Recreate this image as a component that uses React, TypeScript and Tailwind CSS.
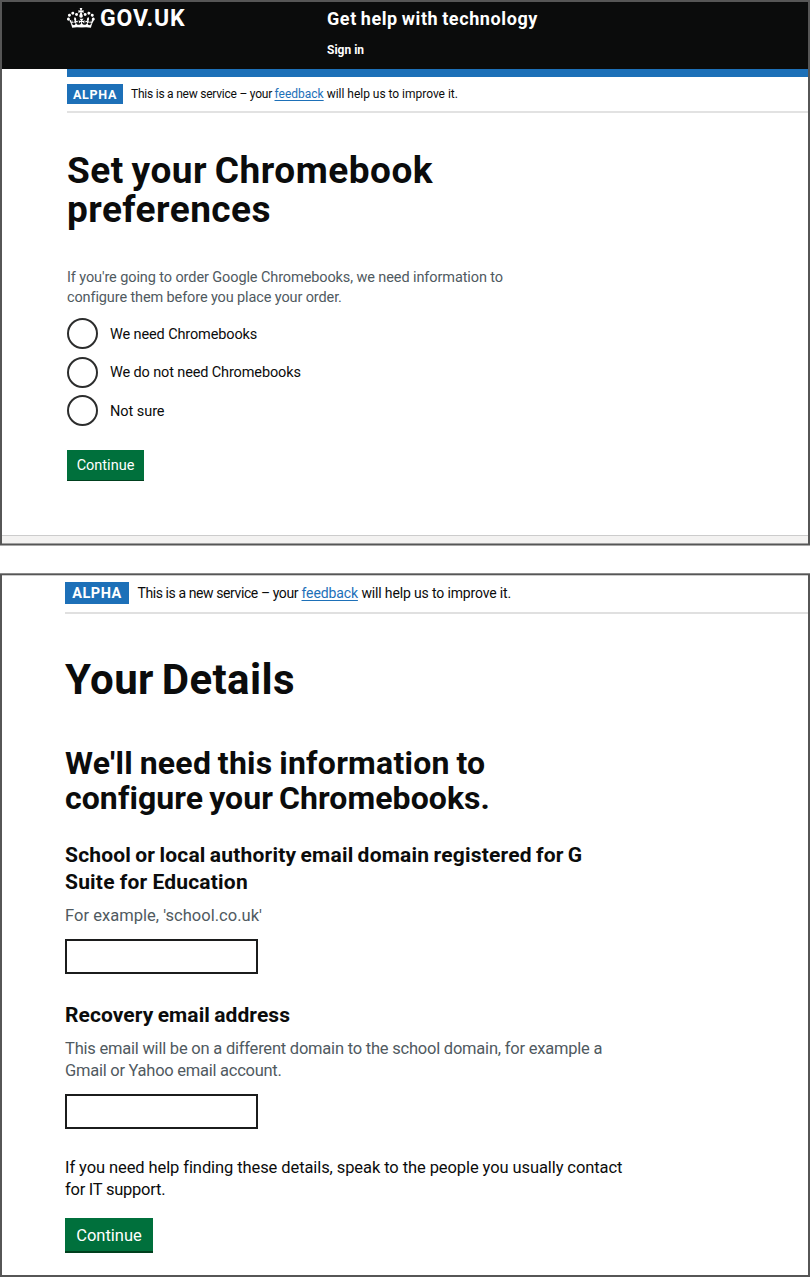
import type { ReactNode } from "react";

function Crown() {
  return (
    <svg viewBox="0 4 36 26" className="h-[21px] w-[28px]" preserveAspectRatio="none" fill="#fff" fillRule="evenodd" aria-hidden="true">
      <path d="M6.7 12.2c1 .4 2.1-.1 2.5-1s-.1-2.1-1-2.5c-1-.4-2.1.1-2.5 1-.4 1 0 2.1 1 2.5m-4.3 2.5c1 .4 2.1-.1 2.5-1s-.1-2.1-1-2.5c-1-.4-2.1.1-2.5 1-.5 1 0 2.1 1 2.5m-1.3 4.8c1 .4 2.1-.1 2.5-1 .4-1-.1-2.1-1-2.5-1-.4-2.1.1-2.5 1-.4 1 0 2.1 1 2.5m10.4-5.8c1 .4 2.1-.1 2.5-1s-.1-2.1-1-2.5c-1-.4-2.1.1-2.5 1s0 2.1 1 2.5m17.4-1.5c-1 .4-2.1-.1-2.5-1s.1-2.1 1-2.5c1-.4 2.1.1 2.5 1 .5 1 0 2.1-1 2.5m4.3 2.5c-1 .4-2.1-.1-2.5-1s.1-2.1 1-2.5c1-.4 2.1.1 2.5 1 .5 1 0 2.1-1 2.5m1.3 4.8c-1 .4-2.1-.1-2.5-1-.4-1 .1-2.1 1-2.5 1-.4 2.1.1 2.5 1 .4 1 0 2.1-1 2.5m-10.4-5.8c-1 .4-2.1-.1-2.5-1s.1-2.1 1-2.5c1-.4 2.1.1 2.5 1s0 2.1-1 2.5" />
      <path d="M18.9 8.9l2.4 1.2V6.5l-2.4.8c-.1-.1-.1-.2-.2-.2l1-3h-3.4l1 3c-.1.1-.2.1-.2.2l-2.4-.8v3.6L17.1 8.9c.1.1.1.2.2.3l-1.4 4.2c-.1.2-.1.4-.1.6 0 1.1.8 2 1.9 2.2h.7c1-.2 1.9-1.1 1.9-2.2 0-.2 0-.4-.1-.6l-1.4-4.2c-.1-.1 0-.2 0-.3" />
      <path d="M18 27.6c4.6 0 8.9.3 12.8.9 1.1-4.6 2.4-7.2 3.8-9.1l-2.6-.9c.3 1.3.3 1.9 0 2.8-.4-.4-.8-1.2-1.1-2.4l-1.2 4.2c.8-.5 1.4-.9 2-.9-1.2 2.6-2.7 3.2-3.6 3-1.2-.2-1.7-1.3-1.5-2.2.3-1.3 1.6-1.6 2.2-.1 1.1-2.3-.8-3.1-2-2.3 1.9-1.9 2.1-3.5.6-5.6-2.1 1.6-2.1 3.2-1.2 5.5-1.2-1.4-3.2-.6-2.5 1.6.9-1.4 2.1-.5 2 .8-.2 1.1-1.7 2.1-3.5 1.9-2.7-.2-2.9-2.1-2.9-3.6.7-.1 1.9.5 2.9 1.9l.4-4.3c-1.1 1.1-2.1 1.4-3.2 1.4.4-1.2 2.1-3 2.1-3h-5.4s1.7 1.9 2.1 3c-1.1 0-2.1-.2-3.2-1.4l.4 4.3c1-1.4 2.2-2 2.9-1.9-.1 1.5-.2 3.4-2.9 3.6-1.9.2-3.4-.8-3.5-1.9-.2-1.3 1-2.2 1.9-.8.7-2.3-1.2-3-2.5-1.6.9-2.2.9-3.9-1.2-5.5-1.5 2-1.3 3.7.6 5.6-1.2-.7-3.1 0-2 2.3.6-1.4 1.9-1.1 2.2.1.2.9-.3 1.9-1.5 2.2-.9.2-2.4-.5-3.6-3 .6 0 1.2.3 2 .9l-1.2-4.2c-.3 1.1-.7 1.9-1.1 2.4-.3-.8-.2-1.4 0-2.8l-2.6.9c1.4 1.9 2.6 4.5 3.8 9.1 3.9-.6 8.2-.9 12.8-.9" />
    </svg>
  );
}

function Line({ className, children }: { className: string; children: ReactNode }) {
  return <span className={`block whitespace-nowrap ${className}`}>{children}</span>;
}

function Radio({ label, className }: { label: string; className: string }) {
  return (
    <label className="flex items-center">
      <input type="radio" name="preference" className="h-[31px] w-[31px] shrink-0 appearance-none rounded-full border-2 border-[#2c2d2d] bg-white" />
      <span className={`ml-3 whitespace-nowrap pt-[2.5px] text-[14.5px] leading-5 ${className}`}>{label}</span>
    </label>
  );
}

export default function App() {
  return (
    <div className="h-[1277px] w-[812px] overflow-hidden bg-white font-['Roboto',sans-serif] text-[#0b0c0c]">
      <section className="flex h-[545px] w-[810px] flex-col border-2 border-b border-[#565656] bg-white shadow-[0_1px_0_#a8a8a8]">
        <header className="h-[67px] shrink-0 bg-[#0b0c0c] pl-[65px] font-bold text-white">
          <div className="flex h-[33px] items-center">
            <div className="flex w-[260px] items-center">
              <Crown />
              <Line className="ml-[5px] text-[23px] leading-[33px] tracking-[0.85px]">GOV.UK</Line>
            </div>
            <Line className="text-[18px] leading-[33px] tracking-[0.6px] [word-spacing:-1.2px]">Get help with technology</Line>
          </div>
          <a className="ml-[260px] block h-[30px] text-[12px] leading-[31px]">Sign in</a>
        </header>
        <div className="ml-[65px] h-2 shrink-0 bg-[#1d70b8]" />
        <div className="ml-[65px] flex h-[36px] shrink-0 items-center border-b-2 border-[#e2e2e2]">
          <strong className="flex h-5 w-14 items-center justify-center bg-[#1d70b8] pt-px text-[12.5px] leading-5 tracking-[0.7px] text-white">ALPHA</strong>
          <p className="ml-2 flex whitespace-nowrap text-[12px] leading-5">
            <span className="w-[143.5px] tracking-[-0.23px]">This is a new service – your</span>
            <a className="text-[#1d70b8] underline underline-offset-2">feedback</a>
            <span className="ml-[3px] tracking-[-0.02px]">will help us to improve it.</span>
          </p>
        </div>
        <main className="pl-[65px]">
          <h1 className="mt-[38px] text-[37px] font-bold leading-[39px]">
            <Line className="tracking-[0.51px] [word-spacing:-2px]">Set your Chromebook</Line>
            <Line className="tracking-[0.45px]">preferences</Line>
          </h1>
          <p className="mt-[39px] text-[14.5px] leading-[19.5px] text-[#505a5f]">
            <Line className="tracking-[-0.1px]">If you&apos;re going to order Google Chromebooks, we need information to</Line>
            <Line className="tracking-[-0.12px]">configure them before you place your order.</Line>
          </p>
          <div className="mt-[11px] flex flex-col gap-[7.5px]">
            <Radio label="We need Chromebooks" className="tracking-[-0.12px]" />
            <Radio label="We do not need Chromebooks" className="tracking-[-0.13px]" />
            <Radio label="Not sure" className="tracking-[-0.05px]" />
          </div>
          <button className="mt-[24px] block h-[31px] w-[77px] border-b-[1.5px] border-[#00401e] bg-[#00703c] text-[14.5px] leading-[31px] text-white">Continue</button>
        </main>
        <div className="mt-auto h-[9px] shrink-0 border-b border-t border-b-[#a0a0a0] border-t-[#cccccc] bg-[#f3f2f1]" />
      </section>

      <section className="mt-[29px] flex h-[703px] w-[810px] flex-col border-2 border-t border-[#565656] bg-white shadow-[0_-1px_0_#8a8a8a,inset_0_1px_0_#cccccc]">
        <div className="ml-[63px] flex h-[39px] shrink-0 items-center border-b-2 border-[#e0e0e0] pb-px">
          <strong className="flex h-[22px] w-16 items-center justify-center bg-[#1d70b8] pt-px text-[14.5px] leading-[22px] tracking-[0.5px] text-white">ALPHA</strong>
          <p className="ml-[8.5px] flex whitespace-nowrap text-[14px] leading-[22px]">
            <span className="w-[164px] tracking-[-0.41px]">This is a new service – your</span>
            <a className="tracking-[-0.12px] text-[#1d70b8] underline underline-offset-2">feedback</a>
            <span className="ml-[3.5px] tracking-[-0.15px]">will help us to improve it.</span>
          </p>
        </div>
        <main className="pl-[63px]">
          <h1 className="mt-[44px] text-[42px] font-bold leading-[44px] tracking-[0.4px] [word-spacing:-3px]">Your Details</h1>
          <h2 className="mt-[44px] text-[32px] font-bold leading-[34.5px]">
            <Line className="tracking-[0.25px] [word-spacing:-1.5px]">We&apos;ll need this information to</Line>
            <Line className="tracking-[0.07px] [word-spacing:-2px]">configure your Chromebooks.</Line>
          </h2>
          <h3 className="mt-[27px] text-[21px] font-bold leading-[26.5px]">
            <Line className="tracking-[0.2px] [word-spacing:-1.2px]">School or local authority email domain registered for G</Line>
            <Line className="tracking-[0.2px] [word-spacing:-0.4px]">Suite for Education</Line>
          </h3>
          <p className="mt-[9.5px] text-[16.5px] leading-[22px] tracking-[0.03px] text-[#505a5f]">For example, &apos;school.co.uk&apos;</p>
          <input type="text" className="mt-[12.5px] block h-[35px] w-[193px] border-2 border-[#1b1c1c] bg-white" />
          <h3 className="mt-[28px] text-[21px] font-bold leading-[26px] tracking-[0.08px] [word-spacing:-1px]">Recovery email address</h3>
          <p className="mt-[10px] text-[16.5px] leading-[22px] text-[#505a5f]">
            <Line className="tracking-[-0.22px]">This email will be on a different domain to the school domain, for example a</Line>
            <Line className="tracking-[-0.26px]">Gmail or Yahoo email account.</Line>
          </p>
          <input type="text" className="mt-[12px] block h-[35px] w-[193px] border-2 border-[#1b1c1c] bg-white" />
          <p className="mt-[28px] text-[16.5px] leading-[22px]">
            <Line className="tracking-[-0.09px]">If you need help finding these details, speak to the people you usually contact</Line>
            <Line className="tracking-[-0.25px]">for IT support.</Line>
          </p>
          <button className="mt-[17px] block h-[35px] w-[88px] border-b-2 border-[#00401e] bg-[#00703c] text-[16.5px] leading-[35px] text-white">Continue</button>
        </main>
      </section>
    </div>
  );
}
